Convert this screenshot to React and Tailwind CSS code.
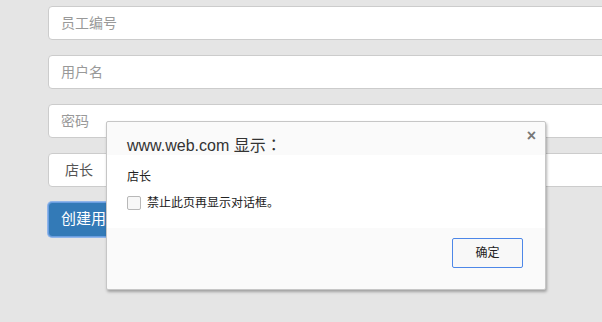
import React from "react";

const font = { fontFamily: '"Liberation Sans", "Noto Sans CJK SC", sans-serif' };

export default function App() {
  return (
    <div
      className="relative w-[602px] h-[322px] overflow-hidden bg-[#e5e5e5]"
      style={font}
    >
      {/* form */}
      <div className="flex flex-col pl-[48px] pt-[6px] w-[700px]">
        {["员工编号", "用户名", "密码"].map((p) => (
          <div
            key={p}
            className="h-[34px] mb-[15px] bg-white border border-[#ccc] rounded-[4px] flex items-center px-[12px] text-[14px] text-[#999]"
          >
            {p}
          </div>
        ))}
        <div className="h-[34px] mb-[15px] bg-white border border-[#ccc] rounded-[4px] flex items-center pl-[16px] text-[14px] text-[#555]">
          店长
        </div>
        <div className="w-[140px] h-[35px] bg-[#337ab7] border border-[#6a9ee0] rounded-[4px] flex items-center px-[12px] text-[15px] text-white shadow-[0_0_0_1px_#8fb5ea]">
          创建用户
        </div>
      </div>

      {/* alert dialog */}
      <div className="absolute left-[106px] top-[121px] w-[440px] h-[169px] bg-[#fafafa] border border-[#c6c6c6] rounded-[2px] shadow-[1px_2px_3px_rgba(0,0,0,0.3)] flex flex-col">
        <div className="h-[33px] relative flex items-end pl-[20px] text-[16px] text-[#333]">
          <span className="leading-none mb-[1px]">
            www.web.com 显示<span className="font-['Noto_Sans_CJK_JP']">：</span>
          </span>
          <span className="absolute right-[9px] top-[6px] text-[16px] font-bold text-[#777] leading-none">×</span>
        </div>
        <div className="h-[73px] bg-white pl-[20px] pt-[16px] text-[12px] text-[#222]">
          <div className="leading-none">店长</div>
          <div className="flex items-center mt-[13px]">
            <span className="w-[14px] h-[14px] border border-[#b8b8b8] rounded-[2px] bg-[#f7f7f7] mr-[6px]" />
            <span className="leading-none">禁止此页再显示对话框。</span>
          </div>
        </div>
        <div className="flex-1 flex justify-end items-start pt-[10px] pr-[22px]">
          <div className="w-[71px] h-[30px] border border-[#4d87e8] rounded-[2px] bg-[#f8f8f8] flex items-center justify-center text-[12px] text-[#222]">
            确定
          </div>
        </div>
      </div>
    </div>
  );
}
